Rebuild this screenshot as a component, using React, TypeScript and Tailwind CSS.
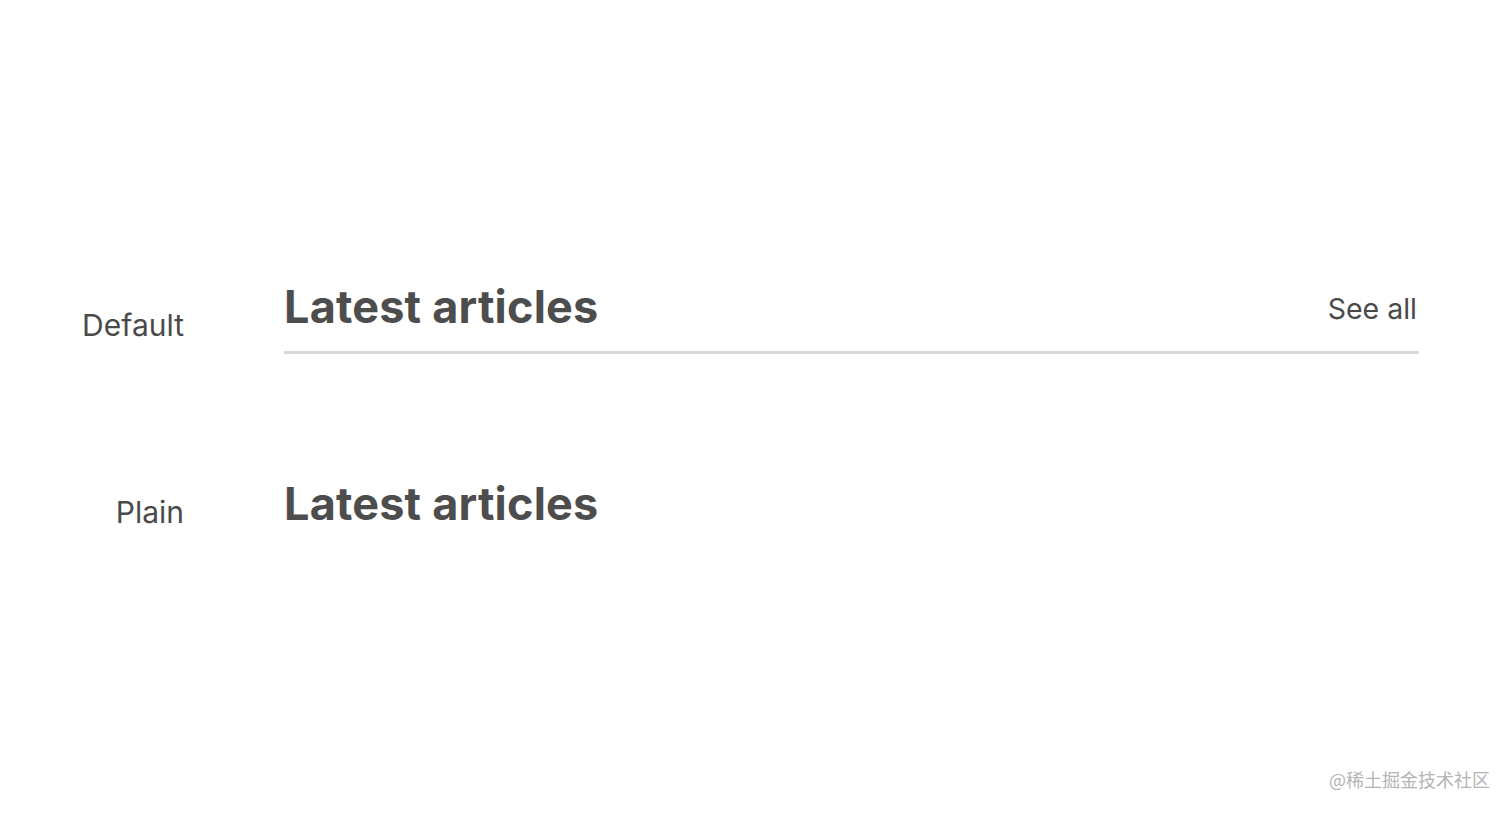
const SectionHeader = ({ title, action, plain }: { title: string; action?: string; plain?: boolean }) => {
    return (
        <div className={plain ? "" : "border-b-[3px] border-[#d8d8d8] pb-[18px]"}>
            <div className="flex flex-row items-start justify-between">
                <h2 className="text-[45px] leading-[52px] font-bold text-[#4d4d4d] tracking-[0.2px]">{title}</h2>
                {action && <a className="text-[28.5px] leading-[40px] text-[#4a4a4a] mt-[8px] mr-[2px]">{action}</a>}
            </div>
        </div>
    )
}

const App = () => {
    return (
        <div className="relative w-[1512px] h-[813px] bg-white font-['Inter','Liberation_Sans',sans-serif]">
            <div className="flex flex-col pt-[281px]">
                <div className="flex flex-row items-start">
                    <div className="w-[184px] text-right text-[30px] leading-[40px] text-[#4a4a4a] pt-[24px]">Default</div>
                    <div className="ml-[100px] w-[1135px]">
                        <SectionHeader title="Latest articles" action="See all" />
                    </div>
                </div>
                <div className="flex flex-row items-start mt-[124px]">
                    <div className="w-[184px] text-right text-[30px] leading-[40px] text-[#4a4a4a] pt-[14px]">Plain</div>
                    <div className="ml-[100px] w-[1135px]">
                        <SectionHeader title="Latest articles" plain />
                    </div>
                </div>
            </div>
            <div className="absolute right-[22px] bottom-[20px] text-[18px] text-[#b4b4b4] font-['Noto_Sans_CJK_SC',sans-serif]">@稀土掘金技术社区</div>
        </div>
    )
}

export default App
